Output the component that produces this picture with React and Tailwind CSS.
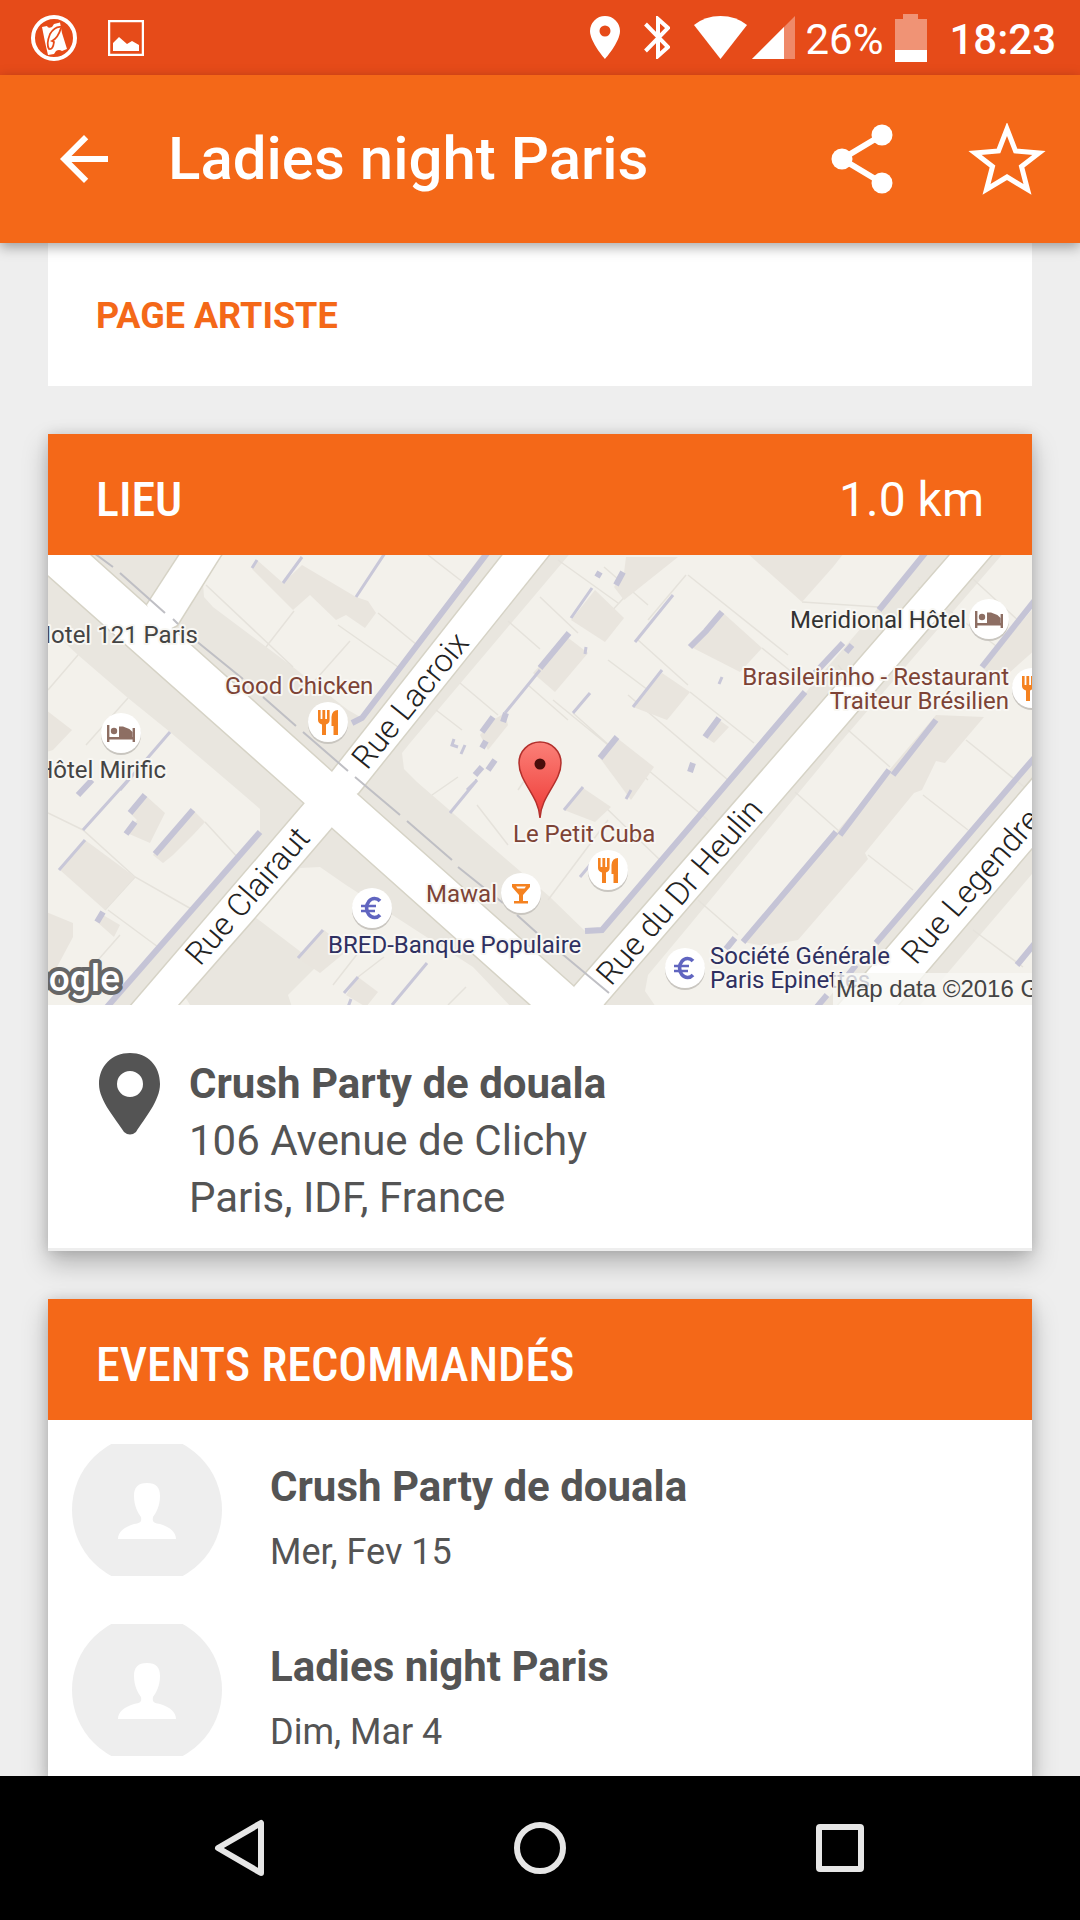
const streets = [
  // avenue de Clichy
  'M-10 11 L-10 -45 L42 0 L284 217 L526 432 L548 450 L560 470 L500 466 L482 449 L242 235 Z',
  // side street, top left
  'M99 50 L140 -13 L181 -13 L129 70 L110 80 Z',
  // rue Lacroix
  'M284 217 L465 -13 L511 -13 L310 238 L290 250 Z',
  // rue Clairaut
  'M257 248 L76 459 L122 459 L207 362 L284 272 L290 250 Z',
  // rue du Dr Heulin
  'M526 432 L776 145 L902 0 L914 -13 L955 -13 L943 0 L793 175 L557 448 L540 470 Z',
  // rue Legendre
  'M1000 206 L795 445 L780 462 L840 462 L854 445 L1000 274 Z',
]

const blocks = [
  '155,28 172,3 174,-5 437,-5 314,163 300,155 245,112 165,52 156,42',
  '525,-5 880,-5 554,375 537,376 502,342 369,227 356,214 354,198 362,188',
  '0,72 30,100 80,143 122,177 190,235 212,254 212,277 59,455 -5,455',
  '207,362 252,313 272,312 298,330 425,412 466,455 245,455 240,440 270,410',
  '958,-5 990,-5 990,198 828,388 770,455 610,455 597,436 600,420 640,372 790,190',
  '990,312 990,455 868,455',
  '128,450 136,440 142,450',
]

const yards = [
  '209,5 204,14 245,55 262,40 288,65 298,60 317,73 328,58 320,46 308,42 254,10 235,28',
  '699,-2 796,-2 785,12 754,47',
  '578,2 630,2 576,45 566,32 576,18',
  '547,35 576,63 557,87 523,65',
  '674,57 714,93 692,117 643,92',
  '519,82 540,98 507,137 485,118',
  '614,118 642,137 619,165 585,152',
  '569,183 606,212 583,245 552,203',
  '535,233 563,252 547,267 516,255',
  '671,165 681,172 666,188 657,182',
  '445,165 457,158 460,170 440,195 432,180',
  '97,240 117,258 102,288 79,278 89,265 82,258',
  '145,255 157,267 145,280 125,300 115,308 105,300',
  '37,285 87,322 57,355 12,315',
  '-2,357 25,368 25,382 9,412 -2,424',
  '-2,155 24,175 5,195 -2,197',
  '55,360 72,370 66,382 49,367',
  '310,422 330,437 318,452 298,440',
  '888,160 936,162 897,208 888,206 874,235 866,238 817,298 820,304 750,385 716,391 695,387',
  '990,48 934,112 950,128 990,92',
  '276,375 300,395 272,418 250,403',
]

const walls = [
  'M440 -3 L314 163 L304 168',
  'M212 277 L59 452',
  'M878 -3 L831 55',
  'M804 90 L798 97 M795 88 L767 118',
  'M757 137 L554 375 L537 376',
  'M888 165 L845 220 M841 215 L792 280 M788 277 L695 387 M687 383 L678 394',
  'M987 202 L828 388 M808 410 L800 420',
  'M987 45 L934 112',
  'M987 388 L969 410 M779 440 L768 453',
  'M575 17 L568 30 M552 17 L549 22 M521 78 L492 113 M674 57 L658 76 L642 92',
  'M671 163 L657 182 M569 182 L552 203 M645 208 L642 217',
  'M445 162 L434 177 M458 158 L455 167 M438 186 L434 193 M447 205 L440 215 M434 212 L427 220',
  'M97 240 L82 258 M87 267 L78 279 M145 255 L107 299 M55 357 L49 367 M44 225 L30 240',
]

const thinWalls = [
  'M209 5 L204 13 M254 2 L235 28 M337 -2 L308 42',
  'M544 33 L523 63 M625 40 L587 87 M614 115 L585 152 M542 138 L525 158 M674 122 L671 129',
  'M535 232 L516 255 M583 235 L578 244 M492 115 L457 158 M429 225 L402 258 M419 235 L429 225',
  'M406 184 L404 190 L410 192 M417 190 L413 199 M542 310 L532 322',
  'M37 285 L11 315 M80 225 L35 275 M122 177 L72 235',
  'M275 375 L250 403 M310 422 L296 438 M379 408 L344 450 M303 444 L300 452 M538 92 L537 99',
]

const lots =
  'M246 56 L218 92 M302 86 L263 130 M158 30 L245 112 M330 58 L369 90 M290 70 L350 112 M380 0 L416 28 ' +
  'M460 66 L492 94 M412 128 L450 160 M388 155 L414 175 M492 42 L530 78 M510 5 L570 48 M556 12 L600 50 ' +
  'M638 20 L600 65 M640 20 L740 100 M595 22 L560 60 M754 47 L830 52 M714 93 L745 118 M560 105 L620 150 ' +
  'M590 85 L640 130 M505 145 L560 190 M580 140 L680 225 M525 158 L600 225 M642 137 L706 188 M600 215 L660 265 ' +
  'M555 250 L612 305 M500 190 L470 235 M429 250 L460 290 M560 265 L500 345 M384 240 L410 222 M480 130 L520 165 ' +
  'M0 135 L30 100 M80 143 L38 190 M0 258 L35 275 L87 322 L145 355 M87 322 L57 355 M157 267 L192 305 ' +
  'M60 355 L110 392 M72 380 L50 405 M15 412 L50 438 M310 398 L285 430 M336 402 L310 422 M418 432 L400 450 ' +
  'M870 32 L960 100 M925 24 L984 78 M800 175 L842 212 M747 237 L792 277 M820 300 L865 335 M650 345 L690 380 ' +
  'M918 185 L980 235 M815 140 L790 110 M925 375 L975 412 M875 240 L920 275'

const tunnel =
  'M46 -2 L65 12 M72 18 L117 58 M125 64 L130 69 M147 85 L195 124 M215 142 L248 171 M255 177 L300 216 ' +
  'M307 222 L352 260 M359 266 L404 305 M410 312 L455 348 M469 360 L489 378 M513 398 L561 438'

const places = [
  { name: 'Hotel 121 Paris', x: 150, y: 88, anchor: 'end', color: '#444444' },
  { name: 'Hôtel Mirific', x: 118, y: 223, anchor: 'end', color: '#444444' },
  { name: 'Good Chicken', x: 177, y: 139, anchor: 'start', color: '#7d4336' },
  { name: 'Meridional Hôtel', x: 918, y: 73, anchor: 'end', color: '#333333' },
  { name: 'Brasileirinho - Restaurant', x: 961, y: 130, anchor: 'end', color: '#7d4336' },
  { name: 'Traiteur Brésilien', x: 961, y: 154, anchor: 'end', color: '#7d4336' },
  { name: 'Le Petit Cuba', x: 465, y: 287, anchor: 'start', color: '#7d4336' },
  { name: 'Mawal', x: 449, y: 347, anchor: 'end', color: '#7d4336' },
  { name: 'BRED-Banque Populaire', x: 280, y: 398, anchor: 'start', color: '#2f3061' },
  { name: 'Société Générale', x: 662, y: 409, anchor: 'start', color: '#2f3061' },
  { name: 'Paris Epinettes', x: 662, y: 433, anchor: 'start', color: '#2f3061' },
]

const streetNames = [
  { name: 'Rue Lacroix', x: 319, y: 216, angle: -51 },
  { name: 'Rue Clairaut', x: 152, y: 412, angle: -49 },
  { name: 'Rue du Dr Heulin', x: 563, y: 432, angle: -49 },
  { name: 'Rue Legendre', x: 868, y: 411, angle: -49 },
]

const pois = [
  { icon: 'food', x: 280, y: 167 },
  { icon: 'bed', x: 73, y: 178 },
  { icon: 'bed', x: 941, y: 64 },
  { icon: 'food', x: 984, y: 133 },
  { icon: 'food', x: 560, y: 315 },
  { icon: 'drink', x: 473, y: 338 },
  { icon: 'bank', x: 324, y: 353 },
  { icon: 'bank', x: 637, y: 413 },
]

const events = [
  { id: 1, name: 'Crush Party de douala', date: 'Mer, Fev 15' },
  { id: 2, name: 'Ladies night Paris', date: 'Dim, Mar 4' },
]

function PoiIcon({ icon }) {
  if (icon === 'food') {
    return (
      <g fill="#f58220">
        <path d="M-10 -12 h2.6 v9 h1.8 v-9 h2.8 v9 h1.8 v-9 H1.6 V-2 Q1.6 1 -2 2.5 V13 H-6 V2.5 Q-10 1 -10 -2 Z" />
        <path d="M10 -12 V13 H5.5 V4 H3.5 V-5 Q4 -12 10 -12 Z" />
      </g>
    )
  }
  if (icon === 'bed') {
    return (
      <g fill="#8d6e63">
        <path d="M-14 -8 h2.4 v12 H11.600 V-5 H14 V9 H11.600 V6.500 H-11.600 V9 H-14 Z" />
        <circle cx="-7" cy="-2" r="3.200" />
        <path d="M-2 4 V-6.500 H2 Q8 -5 11.600 -1 V4 Z" />
      </g>
    )
  }
  if (icon === 'drink') {
    return (
      <path
        d="M-9 -9 H9 V-6 L2 2 V8 H7 V10.500 H-7 V8 H-2 V2 L-9 -6 Z M-5 -6.500 L-3.500 -4.500 H3.500 L5 -6.500 Z"
        fill="#f58220"
        fillRule="evenodd"
      />
    )
  }
  return (
    <g fill="none" stroke="#6065c0" strokeWidth="3.600">
      <path d="M8 -7 A8 9.500 0 1 0 8 7" />
      <path d="M-11 -2 H4 M-11 3 H3" strokeWidth="2.400" />
    </g>
  )
}

function VenueMap() {
  return (
    <svg
      viewBox="0 0 984 450"
      preserveAspectRatio="xMidYMid slice"
      className="block h-[450px] w-full font-['Roboto',sans-serif]"
      role="img"
      aria-label="Carte du lieu"
    >
      <defs>
        <linearGradient id="marker" x1="0" y1="0" x2="0" y2="1">
          <stop offset="0" stopColor="#fb8078" />
          <stop offset="1" stopColor="#ee3a36" />
        </linearGradient>
      </defs>

      <rect width="984" height="450" fill="#e9e6df" />
      {blocks.map((points) => (
        <polygon key={points} points={points} fill="#f3f1eb" />
      ))}
      <path d={lots} fill="none" stroke="#e5e2db" strokeWidth="1.500" />
      {yards.map((points) => (
        <polygon key={points} points={points} fill="#e9e5de" />
      ))}
      {walls.map((d) => (
        <path key={d} d={d} fill="none" stroke="#c5c4d6" strokeWidth="6" />
      ))}
      {thinWalls.map((d) => (
        <path key={d} d={d} fill="none" stroke="#c8c7d8" strokeWidth="3" />
      ))}

      {streets.map((d) => (
        <path key={d} d={d} fill="none" stroke="#d6d3c6" strokeWidth="3" />
      ))}
      {streets.map((d) => (
        <path key={d} d={d} fill="#ffffff" />
      ))}
      <path d={tunnel} fill="none" stroke="#bfbfc4" strokeWidth="2" />

      {streetNames.map((street) => (
        <text
          key={street.name}
          transform={`translate(${street.x} ${street.y}) rotate(${street.angle})`}
          fontSize="32"
          fontWeight="300"
          fill="#222222"
        >
          {street.name}
        </text>
      ))}

      {pois.map((poi) => (
        <g key={`${poi.x}-${poi.y}`} transform={`translate(${poi.x} ${poi.y})`}>
          <circle cy="2" r="20" fill="#c9c6c0" />
          <circle r="20" fill="#ffffff" />
          <PoiIcon icon={poi.icon} />
        </g>
      ))}

      {places.map((place) => (
        <text
          key={place.name}
          x={place.x}
          y={place.y}
          textAnchor={place.anchor}
          fontSize="24"
          fill={place.color}
          stroke="#f8f7f3"
          strokeWidth="4"
          strokeLinejoin="round"
          paintOrder="stroke"
        >
          {place.name}
        </text>
      ))}

      <path
        d="M492 263 C491 241 471 227 471 208 A21 21 0 0 1 513 208 C513 227 493 241 492 263 Z"
        fill="url(#marker)"
        stroke="#b3302c"
        strokeWidth="1.500"
      />
      <circle cx="492" cy="209" r="5.500" fill="#4a0d0b" />

      <text
        x="72"
        y="436"
        textAnchor="end"
        fontSize="37"
        fontWeight="500"
        fill="#ffffff"
        stroke="#666666"
        strokeWidth="8"
        strokeLinejoin="round"
        paintOrder="stroke"
      >
        Google
      </text>

      <rect x="785" y="418" width="199" height="32" fill="#f8f7f4" fillOpacity="0.8" />
      <text x="788" y="442" fontSize="24" fill="#444444" className="font-['Liberation_Sans',sans-serif]">
        Map data ©2016 Google
      </text>
    </svg>
  )
}

function StatusBar() {
  return (
    <div className="flex h-[75px] shrink-0 items-center justify-between bg-[#e64b19] pr-6 pl-[30px] text-[42px] leading-[50px] text-white">
      <div className="flex items-center gap-[30px]">
        <svg viewBox="0 0 48 48" className="size-12" aria-hidden="true">
          <circle cx="24" cy="24" r="21" fill="none" stroke="#fff" strokeWidth="4" />
          <path
            d="M12 13 L17 12 Q18 15 22 13 L24 10 L30 8.500 L32 19 L37 35 L32 37 Q29 35 26 37 L24 40 L18 41 L15 28 Z"
            fill="#fff"
          />
          <path
            d="M31 13 Q25 12 20 20 Q16 30 19 35 Q23 36 24 28 L22 27 Q28 24 31 14"
            fill="none"
            stroke="#e64b19"
            strokeWidth="1.800"
          />
        </svg>
        <svg viewBox="0 0 36 36" className="size-9" aria-hidden="true">
          <rect x="1" y="1" width="34" height="34" fill="none" stroke="#fff" strokeWidth="2.500" />
          <path d="M5 31 V23 L11 17 L19 24 L24 21 L31 25 V31 Z" fill="#fff" />
        </svg>
      </div>

      <div className="flex items-center">
        <div className="flex items-center gap-6">
          <svg viewBox="0 0 30 43" className="h-[43px] w-[30px]" aria-hidden="true">
            <path
              d="M15 0 A15 15 0 0 0 0 15 C0 26 15 43 15 43 S30 26 30 15 A15 15 0 0 0 15 0 Z M15 9.500 A5.500 5.500 0 1 1 15 20.500 A5.500 5.500 0 0 1 15 9.500 Z"
              fill="#fff"
              fillRule="evenodd"
            />
          </svg>
          <svg viewBox="0 0 26 43" className="h-[43px] w-[26px]" aria-hidden="true">
            <path
              d="M1.500 8 L24 31 L14 40 V3 L24 12 L1.500 35"
              fill="none"
              stroke="#fff"
              strokeWidth="4"
            />
          </svg>
          <div className="flex gap-[5px]">
            <svg viewBox="0 0 53 43" className="h-[43px] w-[53px]" aria-hidden="true">
              <path d="M26.500 43 L0 9 Q11 0 26.500 0 T53 9 Z" fill="#fff" />
            </svg>
            <svg viewBox="0 0 43 43" className="size-[43px]" aria-hidden="true">
              <path d="M43 0 V43 H0 Z" fill="#fff" fillOpacity="0.35" />
              <path d="M32 11 V43 H0 Z" fill="#fff" />
            </svg>
          </div>
        </div>
        <span className="ml-2.5 pt-1">26%</span>
        <svg viewBox="0 0 32 48" className="ml-3 h-12 w-8" aria-hidden="true">
          <path d="M8 0 H23 V5 H32 V36 H0 V5 H8 Z" fill="#fff" fillOpacity="0.4" />
          <path d="M0 36 H32 V48 H0 Z" fill="#fff" />
        </svg>
        <span className="ml-[22px] pt-1 font-medium">18:23</span>
      </div>
    </div>
  )
}

function AppBar({ title }) {
  return (
    <header className="relative z-10 flex h-[168px] shrink-0 items-center bg-[#f46818] pr-[34px] pl-12 text-white shadow-[0_4px_12px_rgba(0,0,0,0.35)]">
      <button type="button" aria-label="Retour" className="size-[72px]">
        <svg viewBox="0 0 24 24" className="size-full" aria-hidden="true">
          <path d="M20 11H7.830l5.590-5.590L12 4l-8 8 8 8 1.410-1.410L7.830 13H20v-2z" fill="#fff" />
        </svg>
      </button>
      <h1 className="ml-12 flex-1 truncate text-[60px] leading-[72px] font-medium">{title}</h1>
      <button type="button" aria-label="Partager" className="h-[72px] w-[62px]">
        <svg viewBox="0 0 62 72" className="size-full" aria-hidden="true">
          <path d="M51 12 L11 36 L51 60" fill="none" stroke="#fff" strokeWidth="6" />
          <circle cx="51" cy="12" r="10.500" fill="#fff" />
          <circle cx="11" cy="36" r="10.500" fill="#fff" />
          <circle cx="51" cy="60" r="10.500" fill="#fff" />
        </svg>
      </button>
      <button type="button" aria-label="Ajouter aux favoris" className="ml-[75px] h-[72px] w-[78px]">
        <svg viewBox="0 0 78 72" className="size-full" aria-hidden="true">
          <path
            d="M39 6 L47.500 28 L71 30 L53.500 43.500 L59.500 66.500 L39 54 L18.500 66.500 L24.500 43.500 L7 30 L30.500 28 Z"
            fill="none"
            stroke="#fff"
            strokeWidth="5"
          />
        </svg>
      </button>
    </header>
  )
}

function Card({ title, aside, children }) {
  return (
    <section className="bg-white shadow-[0_12px_24px_rgba(0,0,0,0.25),0_0_12px_rgba(0,0,0,0.12)]">
      <div className="flex h-[121px] items-center justify-between bg-[#f46818] px-12 pt-2.5 text-5xl leading-[60px] text-white">
        <h2 className="font-['Roboto_Condensed','Liberation_Sans_Narrow',sans-serif] font-medium">{title}</h2>
        {aside && <span>{aside}</span>}
      </div>
      {children}
    </section>
  )
}

function EventRow({ event }) {
  return (
    <li>
      <a href={`#event-${event.id}`} className="flex gap-12 px-6 py-6">
        <svg viewBox="0 0 150 132" className="h-[132px] w-[150px] shrink-0" aria-hidden="true">
          <circle cx="75" cy="66" r="75" fill="#eeeeee" />
          <path
            d="M75 39 C84 39 88 43 88 52 C88 62 84 69 81 73 C80 78 82 79 88 80 C98 83 104 88 104 95 H46 C46 88 52 83 62 80 C68 79 70 78 69 73 C66 69 62 62 62 52 C62 43 66 39 75 39 Z"
            fill="#fff"
          />
        </svg>
        <div className="-mb-1 min-w-0 pt-3.5">
          <p className="truncate text-[42px] leading-[57px] font-bold">{event.name}</p>
          <p className="mt-[13px] text-4xl leading-[48px]">{event.date}</p>
        </div>
      </a>
    </li>
  )
}

function NavigationBar() {
  return (
    <nav className="grid h-36 shrink-0 grid-cols-3 place-items-center bg-black px-[90px]">
      <button type="button" aria-label="Précédent" className="size-20">
        <svg viewBox="0 0 80 80" className="size-full" aria-hidden="true">
          <path d="M61 15 V65 L18 40 Z" fill="none" stroke="#e6e6e6" strokeWidth="6" strokeLinejoin="round" />
        </svg>
      </button>
      <button type="button" aria-label="Accueil" className="size-20">
        <svg viewBox="0 0 80 80" className="size-full" aria-hidden="true">
          <circle cx="40" cy="40" r="23" fill="none" stroke="#e6e6e6" strokeWidth="6" />
        </svg>
      </button>
      <button type="button" aria-label="Applications récentes" className="size-20">
        <svg viewBox="0 0 80 80" className="size-full" aria-hidden="true">
          <rect x="19" y="19" width="42" height="42" rx="1" fill="none" stroke="#e6e6e6" strokeWidth="6" strokeLinejoin="round" />
        </svg>
      </button>
    </nav>
  )
}

export default function App() {
  return (
    <div className="flex h-screen flex-col bg-[#eeeeee] font-['Roboto',sans-serif] text-[#545454]">
      <StatusBar />
      <AppBar title="Ladies night Paris" />

      <main className="flex-1 overflow-y-auto px-12 [scrollbar-width:none]">
        <div className="flex flex-col gap-12">
          <section className="bg-white px-12 pt-[49px] pb-[46px]">
            <a href="#artiste" className="block text-4xl leading-[48px] font-bold text-[#f46818]">
              PAGE ARTISTE
            </a>
          </section>

          <Card title="LIEU" aside="1.0 km">
            <VenueMap />
            <div className="flex gap-[29px] border-b-3 border-[#eeeeee] px-12 pt-12 pb-5">
              <svg viewBox="0 0 64 84" className="h-[84px] w-16 shrink-0" aria-hidden="true">
                <path
                  d="M34 0 C16 0 3 13 3 31 C3 48 20 66 28 79 Q34 84 40 79 C48 66 64 48 64 31 C64 13 52 0 34 0 Z M34 18 A13 13 0 1 1 34 44 A13 13 0 0 1 34 18 Z"
                  fill="#545454"
                  fillRule="evenodd"
                />
              </svg>
              <address className="py-0.5 text-[42px] leading-[57px] not-italic">
                <strong className="block font-bold">Crush Party de douala</strong>
                <span className="block">106 Avenue de Clichy</span>
                <span className="block">Paris, IDF, France</span>
              </address>
            </div>
          </Card>

          <Card title="EVENTS RECOMMANDÉS">
            <ul>
              {events.map((event) => (
                <EventRow key={event.id} event={event} />
              ))}
            </ul>
          </Card>
        </div>
      </main>

      <NavigationBar />
    </div>
  )
}
